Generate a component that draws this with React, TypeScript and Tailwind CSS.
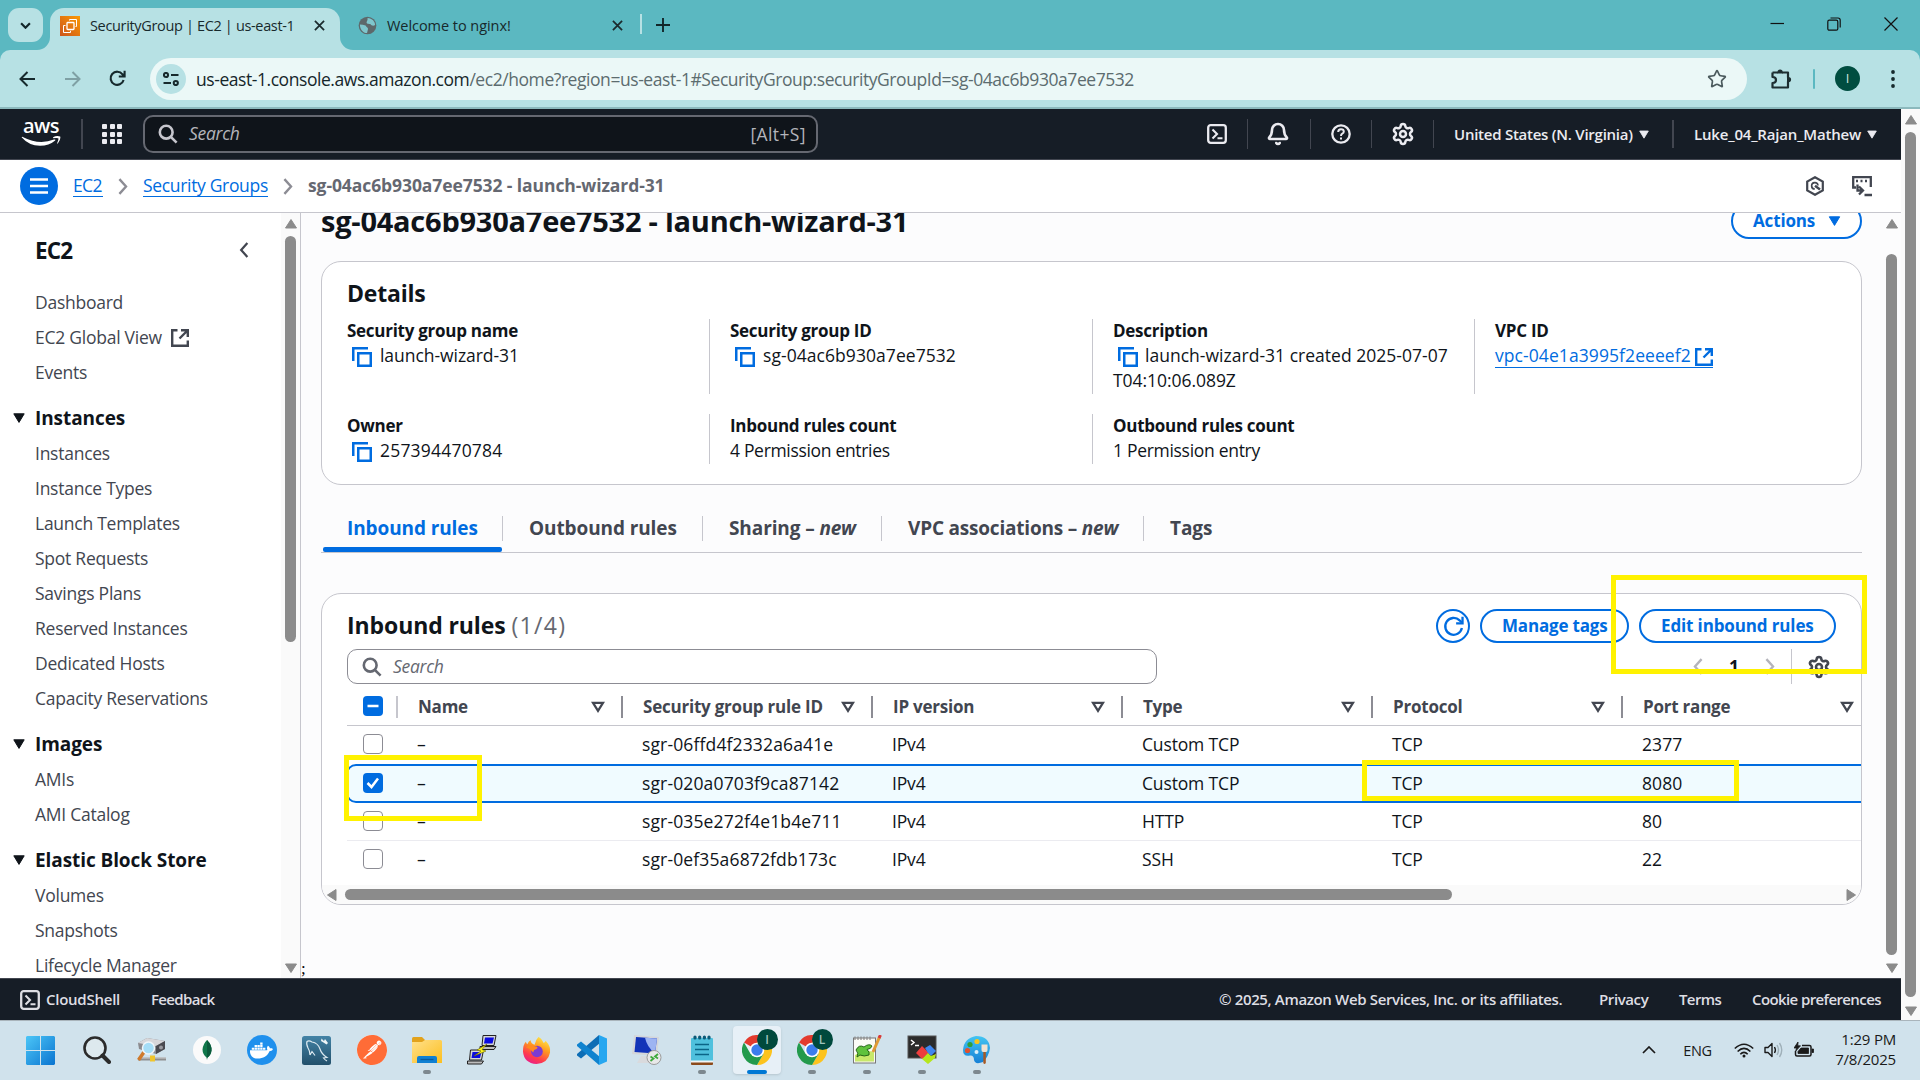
import React from 'react';
import { Settings, Bell, Star } from 'lucide-react';
import { FaDocker } from 'react-icons/fa';
import { SiPostman } from 'react-icons/si';

type Dir = 'up' | 'down' | 'left' | 'right';

function Arrow({ dir }: { dir: Dir }) {
  const d = {
    up: 'M6 1.5 L11.5 10 H.5 Z',
    down: 'M6 10.5 L11.5 2 H.5 Z',
    left: 'M1.5 6 L10 .5 V11.5 Z',
    right: 'M10.5 6 L2 .5 V11.5 Z',
  }[dir];
  return (
    <svg viewBox="0 0 12 12" className="size-3 shrink-0">
      <path d={d} fill="#8b8b8b" stroke="#8b8b8b" strokeLinejoin="round" />
    </svg>
  );
}

function Caret({ className }: { className: string }) {
  return (
    <svg viewBox="0 0 12 10" className={className}>
      <path d="M.8 .8 H11.2 L6 9.4 Z" fill="currentColor" stroke="currentColor" strokeLinejoin="round" />
    </svg>
  );
}

function CopyIcon() {
  return (
    <svg viewBox="0 0 20 20" className="mr-[8px] ml-[5px] inline-block size-5 align-[-5px]" fill="none" stroke="#006ce0" strokeWidth="2.5">
      <path d="M1.25 14 V1.25 H16" />
      <rect x="6.25" y="6.25" width="12.5" height="12.5" />
    </svg>
  );
}

function External({ className }: { className: string }) {
  return (
    <svg viewBox="0 0 18 18" className={className} fill="none" stroke="currentColor" strokeWidth="2.4">
      <path d="M6.5 1.2 H1.2 V16.8 H16.8 V11.5" />
      <path d="M10 1.2 H16.8 V8 M16.5 1.5 L8.5 9.5" />
    </svg>
  );
}

function SearchIcon({ className }: { className: string }) {
  return (
    <svg viewBox="0 0 20 20" className={className} fill="none" stroke="currentColor" strokeWidth="2.6">
      <circle cx="8.2" cy="8.2" r="6.4" />
      <path d="M12.8 12.8 L18.6 18.6" />
    </svg>
  );
}

function Chevron({ className, left = false }: { className: string; left?: boolean }) {
  return (
    <svg viewBox="0 0 10 18" className={className} fill="none" stroke="currentColor" strokeWidth="2.5">
      <path d={left ? 'M8.8 1.2 L1.8 9 L8.8 16.8' : 'M1.2 1.2 L8.2 9 L1.2 16.8'} />
    </svg>
  );
}

function Shell({ className }: { className: string }) {
  return (
    <svg viewBox="0 0 20 20" className={className} fill="none" stroke="currentColor" strokeWidth="2.3">
      <rect x="1.2" y="1.2" width="17.6" height="17.6" rx="2.5" />
      <path d="M5.5 5.5 L10 10 L5.5 14.5 M10.5 14.2 H15.5" strokeWidth="2.1" />
    </svg>
  );
}

function Close({ className }: { className: string }) {
  return (
    <svg viewBox="0 0 12 12" className={className} fill="none" stroke="#1b2a2d" strokeWidth="1.9">
      <path d="M1 1 L11 11 M11 1 L1 11" />
    </svg>
  );
}

function TabStrip() {
  return (
    <div className="flex h-[50px] items-start bg-[#5bb8c1] text-[#17292c]">
      <div className="mt-2 ml-2 flex h-[34px] w-[35px] items-center justify-center rounded-[11px] bg-[#b7e1e4]">
        <svg viewBox="0 0 10 6" className="h-[7px] w-[11px]" fill="none" stroke="#12272a" strokeWidth="2">
          <path d="M1 1 L5 5 L9 1" />
        </svg>
      </div>
      <div className="relative mt-2 ml-[7px] flex h-[42px] w-[290px] items-center rounded-t-[14px] bg-[#b7e1e4] pb-[6px] pl-[10px]">
        <svg viewBox="0 0 13 13" className="absolute bottom-0 -left-[13px] size-[13px]">
          <path d="M13 0 V13 H0 A13 13 0 0 0 13 0Z" fill="#b7e1e4" />
        </svg>
        <svg viewBox="0 0 13 13" className="absolute -right-[13px] bottom-0 size-[13px]">
          <path d="M0 0 V13 H13 A13 13 0 0 1 0 0Z" fill="#b7e1e4" />
        </svg>
        <svg viewBox="0 0 20 20" className="-mt-px size-5" fill="none" stroke="#fff" strokeWidth="1">
          <defs>
            <linearGradient id="ec2" x1="0" y1="1" x2="1" y2="0">
              <stop offset="0" stopColor="#cc551c" />
              <stop offset="1" stopColor="#fb9a04" />
            </linearGradient>
          </defs>
          <rect width="20" height="20" fill="url(#ec2)" stroke="none" />
          <rect x="7" y="6.5" width="7" height="7" rx=".8" strokeWidth="1.3" />
          <path d="M9.5 4.5 V3.5 H16.5 V10.5 H15.5 M5.5 9.5 H3.5 V16.5 H10.5 V14.8" />
        </svg>
        <span className="ml-[10px] w-[219px] text-[14.5px] tracking-[-0.34px] whitespace-nowrap">SecurityGroup | EC2 | us-east-1</span>
        <Close className="-mt-px ml-[5px] size-[11px] shrink-0" />
      </div>
      <div className="mt-[7px] ml-[18px] flex h-9 w-[265px] items-center">
        <svg viewBox="0 0 20 20" className="size-[19px]">
          <circle cx="10" cy="10" r="9.3" fill="#5d686b" />
          <path d="M2 9 C4 9 6 9.5 8 10 C9 12 11 12 10.5 14 L9.5 18 C5 18 2 14 2 9Z M10 2 C15 2 18 6 18 9.5 C16 11 14 10 13 8.5 C11 8 9 8.5 9 6.5 C9.5 5 10.500 4 10 2Z" fill="#7fc6cd" />
        </svg>
        <span className="mt-px ml-[10px] flex-1 text-[14.5px] tracking-[-0.05px]">Welcome to nginx!</span>
        <Close className="size-[11px]" />
      </div>
      <div className="mt-[14px] ml-[17px] h-5 w-[2px] bg-[#b7e1e4]" />
      <svg viewBox="0 0 14 14" className="mt-[18px] ml-[14px] size-[14px]" stroke="#12272a" strokeWidth="1.9">
        <path d="M7 0 V14 M0 7 H14" />
      </svg>
      <div className="mt-[17px] mr-[22px] ml-auto flex items-center gap-[43px]">
        <svg viewBox="0 0 14 14" className="size-[14px]" stroke="#111" strokeWidth="1.2">
          <path d="M.5 6.5 H14" />
        </svg>
        <svg viewBox="0 0 14 14" className="size-[14px]" fill="none" stroke="#111" strokeWidth="1.2">
          <rect x=".8" y="3.2" width="10" height="10" rx="1.5" />
          <path d="M3.5 1 H11 Q13.2 1 13.2 3.2 V10.5" />
        </svg>
        <svg viewBox="0 0 14 14" className="size-[14px]" stroke="#111" strokeWidth="1.2">
          <path d="M.5 .5 L13.5 13.5 M13.5 .5 L.5 13.5" />
        </svg>
      </div>
    </div>
  );
}

function Toolbar() {
  return (
    <div className="bg-[#5bb8c1]">
      <div className="flex h-[59px] items-center rounded-t-[10px] border-b-2 border-[#8cb9bd] bg-[#b7e1e4] text-[#17292c]">
        <svg viewBox="0 0 16 16" className="ml-[19px] size-4" fill="none" stroke="#16292c" strokeWidth="2">
          <path d="M16 8 H2 M8.5 1 L1.5 8 L8.5 15" />
        </svg>
        <svg viewBox="0 0 16 16" className="ml-[30px] size-4" fill="none" stroke="#7fa0a4" strokeWidth="2">
          <path d="M0 8 H14 M7.5 1 L14.5 8 L7.5 15" />
        </svg>
        <svg viewBox="0 0 17 17" className="ml-[28px] size-[17px]" fill="none" stroke="#16292c" strokeWidth="2.1">
          <path d="M14.6 10 A6.6 6.6 0 1 1 13.5 4.3 L15.3 6.3 M15.6 .8 V6.5 H9.8" />
        </svg>
        <div className="ml-[24px] flex h-[42px] w-[1597px] items-center rounded-full bg-[#ebf8f7] pl-[6px]">
          <div className="flex size-[30px] items-center justify-center rounded-full bg-[#b7e1e4]">
            <svg viewBox="0 0 16 14" className="h-[14px] w-4" fill="none" stroke="#16292c" strokeWidth="2">
              <circle cx="3" cy="3" r="2.1" />
              <circle cx="12.8" cy="11" r="2.1" />
              <path d="M8 3 H15.5 M.5 11 H8" />
            </svg>
          </div>
          <span className="mt-[2px] ml-[10px] text-[17.5px] tracking-[-0.44px] whitespace-nowrap text-[#5c6c6f]">
            <span className="text-[#15262a]">us-east-1.console.aws.amazon.com</span>
            /ec2/home?region=us-east-1#SecurityGroup:securityGroupId=sg-04ac6b930a7ee7532
          </span>
          <Star className="mr-[20px] ml-auto size-5 text-[#4b5a5d]" strokeWidth={2} strokeLinejoin="miter" />
        </div>
        <svg viewBox="0 0 22 22" className="ml-[23px] size-[22px]">
          <path d="M2.5 4.5 H8 M12 4.5 H18 V9.5 M18 13.5 V19.5 H2.5 V15 Q6 15 6 12 Q6 9 2.5 9 V4.5" fill="none" stroke="#1d2e31" strokeWidth="2.2" strokeLinejoin="round" />
          <path d="M7.5 5.5 V4 A2.6 2.6 0 0 1 12.7 4 V5.5Z M17 9 H18.5 A2.6 2.6 0 0 1 18.5 14.2 H17Z" fill="#1d2e31" />
        </svg>
        <div className="ml-[21px] h-5 w-[2px] rounded bg-[#5bb8c1]" />
        <div className="ml-[20px] flex size-[25px] items-center justify-center rounded-full bg-[#004d40] text-[13px] text-[#cfe3df]">I</div>
        <svg viewBox="0 0 4 18" className="ml-[31px] h-[18px] w-1" fill="#16292c">
          <circle cx="2" cy="2" r="1.9" />
          <circle cx="2" cy="9" r="1.9" />
          <circle cx="2" cy="16" r="1.9" />
        </svg>
      </div>
    </div>
  );
}

function AwsHeader() {
  return (
    <header className="flex h-[51px] items-center border-b border-[#424650] bg-[#161d26] text-[#ebebf0]">
      <div className="ml-[21px] flex h-[30px] w-10 flex-col items-center">
        <span className="-mt-[2px] text-[20px] leading-[18px] font-semibold tracking-[-0.6px] text-white">aws</span>
        <svg viewBox="0 0 40 10" className="mt-[1px] h-[10px] w-10" fill="#fff">
          <path d="M.6 1.2 Q1 .5 1.8 1 Q18 9.5 33 3.6 Q35 3 34.2 4.5 Q28 9.8 19 9.8 Q8 9.7 .6 1.2Z" />
          <path d="M32 1.2 Q36 -.6 39.2 .6 Q40 3.6 36.8 7.6 Q36 8 36.2 7 Q38 3 37.2 2.2 Q35.5 1.6 32.3 2.2Z" />
        </svg>
      </div>
      <div className="ml-[20px] h-[30px] w-[2px] bg-[#424650]" />
      <div className="ml-[19px] grid grid-cols-3 gap-[2.5px]">
        {Array.from({ length: 9 }, (_, i) => (
          <span key={i} className="size-[5px] rounded-[1px] bg-[#ebebf0]" />
        ))}
      </div>
      <div className="ml-[21px] flex h-[38px] w-[675px] items-center rounded-[10px] border-2 border-[#656871] bg-[#0f141a] pr-[10px] pl-[13px]">
        <SearchIcon className="size-5 text-[#c6c6cd]" />
        <span className="-mt-px ml-[11px] flex-1 text-[17.5px] tracking-[-0.3px] text-[#b4b4bb] italic">Search</span>
        <span className="text-[17.5px] tracking-[0.4px] text-[#b4b4bb]">[Alt+S]</span>
      </div>
      <Shell className="ml-[389px] size-[20px]" />
      <div className="ml-[20px] h-[30px] w-px bg-[#424650]" />
      <Bell className="ml-[18px] size-[24px]" strokeWidth={2.6} />
      <div className="ml-[20px] h-[30px] w-px bg-[#424650]" />
      <svg viewBox="0 0 20 20" className="ml-[20px] size-[20px]" fill="none" stroke="currentColor" strokeWidth="2.3">
        <circle cx="10" cy="10" r="8.7" />
        <path d="M7.2 8 Q7.2 5.2 10 5.2 Q12.8 5.2 12.8 7.6 Q12.8 9 11.3 9.7 Q10 10.4 10 12 M10 13.4 V15.6" strokeWidth="2" />
      </svg>
      <div className="ml-[20px] h-[28px] w-px bg-[#424650]" />
      <Settings className="ml-[19px] size-[24px]" strokeWidth={2.5} />
      <div className="ml-[18px] h-[28px] w-px bg-[#424650]" />
      <span className="ml-[20px] w-[178px] text-[15px] font-semibold tracking-[-0.25px] whitespace-nowrap">United States (N. Virginia)</span>
      <Caret className="ml-[7px] h-[9px] w-[10px]" />
      <div className="ml-[23px] h-[28px] w-[2px] bg-[#424650]" />
      <span className="ml-[20px] w-[167px] text-[15px] font-semibold tracking-[-0.18px] whitespace-nowrap">Luke_04_Rajan_Mathew</span>
      <Caret className="ml-[6px] h-[9px] w-[10px]" />
    </header>
  );
}

function Breadcrumbs() {
  return (
    <div className="flex h-[53px] items-center border-b border-[#c6c6cd] bg-white text-[17.5px]">
      <div className="ml-[20px] flex size-[38px] items-center justify-center rounded-full bg-[#006ce0]">
        <svg viewBox="0 0 18 16" className="h-4 w-[18px]" stroke="#fff" strokeWidth="2.3">
          <path d="M0 1.5 H18 M0 8 H18 M0 14.5 H18" />
        </svg>
      </div>
      <span className="-mt-px ml-[15px] w-[30px] border-b border-[#006ce0] leading-[22px] tracking-[-0.6px] text-[#006ce0]">EC2</span>
      <Chevron className="ml-[15px] h-[17px] w-[10px] text-[#8c8c94]" />
      <span className="-mt-px ml-[15px] w-[125px] border-b border-[#006ce0] leading-[22px] tracking-[-0.33px] whitespace-nowrap text-[#006ce0]">Security Groups</span>
      <Chevron className="ml-[15px] h-[17px] w-[10px] text-[#8c8c94]" />
      <span className="-mt-px ml-[15px] font-bold tracking-[-0.09px] text-[#656871]">sg-04ac6b930a7ee7532 - launch-wizard-31</span>
      <svg viewBox="0 0 20 20" className="ml-auto size-[20px] text-[#424650]" fill="none" stroke="currentColor" strokeWidth="2.2">
        <path d="M10 1.2 L17.8 5.6 V14.4 L10 18.8 L2.2 14.4 V5.6 Z" />
        <path d="M13 9.5 A3.2 3.2 0 1 0 9.8 13" strokeWidth="1.6" />
        <path d="M10 9.8 L15 13.5" strokeWidth="2.4" />
      </svg>
      <svg viewBox="0 0 22 22" className="mr-[28px] ml-[26px] size-[22px] text-[#424650]" fill="none" stroke="currentColor" strokeWidth="2.3">
        <path d="M5 12.5 H2.2 V2.2 H19.8 V12" />
        <path d="M5 6 H7 M9.5 6 H11.5 M14 6 H16" />
        <path d="M6.5 9.5 V15.5 H11 M8 11.5 L12 15.5 L8 19.5 M13.5 20 H21" />
      </svg>
    </div>
  );
}

const NAV: { title?: string; items: string[] }[] = [
  { items: ['Dashboard', 'EC2 Global View', 'Events'] },
  {
    title: 'Instances',
    items: ['Instances', 'Instance Types', 'Launch Templates', 'Spot Requests', 'Savings Plans', 'Reserved Instances', 'Dedicated Hosts', 'Capacity Reservations'],
  },
  { title: 'Images', items: ['AMIs', 'AMI Catalog'] },
  { title: 'Elastic Block Store', items: ['Volumes', 'Snapshots', 'Lifecycle Manager'] },
];

function Sidebar() {
  return (
    <aside className="flex w-[301px] shrink-0 border-r border-[#c6c6cd] bg-white">
      <div className="w-[281px] overflow-hidden">
        <div className="flex h-[72px] items-center pt-[3px] pl-[35px]">
          <span className="w-[204px] text-[22.5px] font-bold tracking-[-0.9px] text-[#0f141a]">EC2</span>
          <Chevron left className="-mt-px h-[16px] w-[10px] text-[#424650]" />
        </div>
        {NAV.map((g) => (
          <div key={g.title ?? 'top'}>
            {g.title && (
              <div className="mt-[10px] flex h-9 items-center pl-[13px]">
                <Caret className="h-[10px] w-3 text-[#0f141a]" />
                <span className="ml-[10px] text-[19px] font-bold tracking-[-0.08px] text-[#0f141a]">{g.title}</span>
              </div>
            )}
            {g.items.map((t) => (
              <div key={t} className="flex h-[35px] items-center pl-[35px] text-[17.5px] tracking-[-0.25px] text-[#424650]">
                {t}
                {t === 'EC2 Global View' && <External className="mt-px ml-[9px] size-[18px]" />}
              </div>
            ))}
          </div>
        ))}
      </div>
      <div className="flex w-[19px] flex-col items-center bg-[#fafafa] pt-[5px] pb-[4px]">
        <Arrow dir="up" />
        <div className="mt-[6px] h-[406px] w-[11px] rounded-full bg-[#8b8b8b]" />
        <div className="mt-auto">
          <Arrow dir="down" />
        </div>
      </div>
    </aside>
  );
}

function Field({ label, children, first = false }: { label: string; children: React.ReactNode; first?: boolean }) {
  return (
    <div className={first ? '' : 'border-l border-[#c6c6cd] pl-[20px]'}>
      <div className="-mt-px text-[17px] font-bold tracking-[-0.27px]">{label}</div>
      <div className="whitespace-nowrap">{children}</div>
    </div>
  );
}

function Details() {
  return (
    <section className="mx-[20px] mt-[22px] h-[224px] rounded-[20px] border border-[#c6c6cd] bg-white pt-[16px] pl-[25px] text-[17.5px] leading-[25px] text-[#0f141a]">
      <h2 className="h-[41px] text-[23px] leading-[30px] font-bold tracking-[-0.2px]">Details</h2>
      <div className="grid h-[75px] grid-cols-[362px_383px_382px_1fr]">
        <Field first label="Security group name">
          <CopyIcon />
          <span className="tracking-[-0.05px]">launch-wizard-31</span>
        </Field>
        <Field label="Security group ID">
          <CopyIcon />
          <span className="tracking-[0.06px]">sg-04ac6b930a7ee7532</span>
        </Field>
        <Field label="Description">
          <CopyIcon />
          <span className="-ml-px tracking-[0.02px]">launch-wizard-31 created 2025-07-07</span>
          <br />
          <span className="tracking-[-0.05px]">T04:10:06.089Z</span>
        </Field>
        <Field label="VPC ID">
          <span className="border-b border-[#006ce0] text-[#006ce0]">
            <span className="tracking-[0.08px]">vpc-04e1a3995f2eeeef2 </span>
            <External className="inline-block size-[18px] align-[-4px]" />
          </span>
        </Field>
      </div>
      <div className="mt-5 grid h-[50px] grid-cols-[362px_383px_382px_1fr]">
        <Field first label="Owner">
          <CopyIcon />
          <span className="tracking-[0.2px]">257394470784</span>
        </Field>
        <Field label="Inbound rules count">
          <span className="tracking-[-0.32px]">4 Permission entries</span>
        </Field>
        <Field label="Outbound rules count">
          <span className="tracking-[-0.3px]">1 Permission entry</span>
        </Field>
      </div>
    </section>
  );
}

function Tabs() {
  const tab = 'flex h-[25px] items-center pl-[26px] border-r border-[#c6c6cd]';
  return (
    <div className="mx-[20px] mt-[31px] flex h-[37px] border-b border-[#c6c6cd] text-[19px] font-bold tracking-[-0.1px] whitespace-nowrap text-[#424650]">
      <div className="relative flex h-[25px] w-[182px] items-center border-r border-[#c6c6cd] pl-[26px] text-[#006ce0]">
        Inbound rules
        <span className="absolute top-[31px] left-[2px] h-[5px] w-[179px] rounded-[2px] bg-[#006ce0]" />
      </div>
      <div className={`${tab} w-[200px]`}>Outbound rules</div>
      <div className={`${tab} w-[179px]`}>
        Sharing –&nbsp;<i className="tracking-[-0.3px]">new</i>
      </div>
      <div className={`${tab} w-[262px] tracking-[-0.2px]`}>
        VPC associations –&nbsp;<i>new</i>
      </div>
      <div className="flex h-[25px] items-center pl-[26px]">Tags</div>
    </div>
  );
}

type Check = 'none' | 'on' | 'mixed';

function Box({ state }: { state: Check }) {
  if (state === 'none') return <span className="block size-5 rounded-[4px] border-[1.5px] border-[#8c8c94] bg-white" />;
  return (
    <svg viewBox="0 0 20 20" className="size-5" fill="none" stroke="#fff" strokeWidth="2.5">
      <rect width="20" height="20" rx="4" fill="#006ce0" stroke="none" />
      <path d={state === 'on' ? 'M4.5 10 L8.5 14 L15 5.5' : 'M4.5 10 H15.5'} />
    </svg>
  );
}

const COLS = ['Name', 'Security group rule ID', 'IP version', 'Type', 'Protocol', 'Port range'];
const ROWS: { h: string; sel?: boolean; v: string[] }[] = [
  { h: 'h-[38px] pb-[2px]', v: ['–', 'sgr-06ffd4f2332a6a41e', 'IPv4', 'Custom TCP', 'TCP', '2377'] },
  { h: 'h-[39px] -mr-[12px] -ml-px rounded-[10px] border-2 border-[#006ce0] bg-[#f0fbff] pb-[2px]', sel: true, v: ['–', 'sgr-020a0703f9ca87142', 'IPv4', 'Custom TCP', 'TCP', '8080'] },
  { h: 'h-[38px] border-b border-[#ebebf0] pb-[2px]', v: ['–', 'sgr-035e272f4e1b4e711', 'IPv4', 'HTTP', 'TCP', '80'] },
  { h: 'h-[38px] pb-[3px]', v: ['–', 'sgr-0ef35a6872fdb173c', 'IPv4', 'SSH', 'TCP', '22'] },
];
const WIDTHS = ['w-[225px]', 'w-[250px]', 'w-[250px]', 'w-[250px]', 'w-[250px]', 'w-[240px]'];

function Rules() {
  return (
    <section className="mx-[20px] mt-[40px] h-[312px] overflow-hidden rounded-[20px] border border-[#c6c6cd] bg-white text-[#0f141a]">
      <div className="flex h-[55px] items-center pt-[9px] pr-[25px] pl-[25px]">
        <h2 className="-mt-[2px] text-[23px] leading-[30px] font-bold tracking-[-0.1px]">
          Inbound rules <span className="font-normal tracking-[1.3px] text-[#656871]">(1/4)</span>
        </h2>
        <div className="ml-auto flex h-[34px] gap-[10px] text-[17px] font-bold tracking-[-0.13px] whitespace-nowrap text-[#006ce0]">
          <div className="flex w-[34px] items-center justify-center rounded-full border-2 border-[#006ce0]">
            <svg viewBox="0 0 20 20" className="size-[21px]" fill="none" stroke="currentColor" strokeWidth="2.2">
              <path d="M18 11.5 A8 8 0 1 1 15.8 4.2 L18 6.2" />
              <path d="M18.6 .8 V7 H12.5" />
            </svg>
          </div>
          <div className="flex w-[149px] items-center rounded-full border-2 border-[#006ce0] pl-5 tracking-[-0.18px]">Manage tags</div>
          <div className="flex w-[197px] items-center rounded-full border-2 border-[#006ce0] pl-5">Edit inbound rules</div>
        </div>
      </div>
      <div className="flex h-[35px] items-center pr-[30px] pl-[25px]">
        <div className="flex h-[35px] w-[810px] items-center rounded-[10px] border-[1.5px] border-[#8c8c94] pl-[14px] text-[#656871]">
          <SearchIcon className="size-5" />
          <span className="-mt-px ml-[11px] text-[17.5px] tracking-[-0.3px] italic">Search</span>
        </div>
        <Chevron left className="ml-auto h-[17px] w-[10px] text-[#b4b4bb]" />
        <span className="ml-[22px] w-[18px] text-center text-[17.5px] font-bold">1</span>
        <Chevron className="ml-[22px] h-[17px] w-[10px] text-[#b4b4bb]" />
        <div className="ml-[16px] h-[35px] w-px bg-[#c6c6cd]" />
        <Settings className="ml-[15px] size-[24px] text-[#424650]" strokeWidth={2.6} />
      </div>
      <div className="ml-[25px] flex h-[42px] items-center border-b border-[#c6c6cd] pt-[4px]">
        <div className="flex h-[22px] w-[51px] shrink-0 items-center border-r-2 border-[#c6c6cd] pb-[2px] pl-[16px]">
          <Box state="mixed" />
        </div>
        {COLS.map((c, i) => (
          <div
            key={c}
            className={`${WIDTHS[i]} flex h-[22px] shrink-0 items-center pl-[20px] text-[17px] font-bold tracking-[-0.22px] whitespace-nowrap text-[#424650] ${i < 5 ? 'border-r-2 border-[#8c8c94] pr-[16px]' : 'pr-[9px]'}`}
          >
            {c}
            <svg viewBox="0 0 14 12" className="ml-auto h-[12px] w-[14px]" fill="none" stroke="#424650" strokeWidth="2.3">
              <path d="M2 1.8 H12 L7 9.8 Z" />
            </svg>
          </div>
        ))}
      </div>
      <div className="h-[159px]">
        {ROWS.map((r) => (
          <div key={r.v[1]} className="ml-[25px]">
            <div className={`flex items-center ${r.h}`}>
              <div className={r.sel ? 'w-[49px] shrink-0 pl-[15px]' : 'w-[50px] shrink-0 pl-[16px]'}>
                <Box state={r.sel ? 'on' : 'none'} />
              </div>
              {r.v.map((v, i) => (
                <div key={i} className={`${WIDTHS[i]} shrink-0 pt-px pl-[20px] text-[17.5px] ${i === 1 ? 'tracking-[0.14px]' : i === 5 ? 'tracking-[0.1px]' : 'tracking-[-0.15px]'}`}>
                  {v}
                </div>
              ))}
            </div>
          </div>
        ))}
      </div>
      <div className="flex h-[19px] items-center bg-[#fafafa] pr-[4px] pl-[4px]">
        <Arrow dir="left" />
        <div className="ml-[7px] h-[11px] w-[1107px] rounded-full bg-[#8b8b8b]" />
        <div className="ml-auto">
          <Arrow dir="right" />
        </div>
      </div>
    </section>
  );
}

function Main() {
  return (
    <main className="relative flex min-w-0 flex-1 bg-[#fcfcfd]">
      <div className="h-full w-[1581px] overflow-hidden">
        <div className="-mt-[10px] flex h-9 items-center justify-between px-[20px]">
          <h1 className="text-[29px] leading-9 font-bold tracking-[-0.24px] text-[#0f141a]">sg-04ac6b930a7ee7532 - launch-wizard-31</h1>
          <div className="flex h-[36px] w-[131px] items-center rounded-full border-2 border-[#006ce0] bg-white pl-5 text-[17px] font-bold tracking-[-0.15px] text-[#006ce0]">
            Actions
            <Caret className="ml-[13px] h-[10px] w-[13px]" />
          </div>
        </div>
        <Details />
        <Tabs />
        <Rules />
      </div>
      <div className="flex w-[19px] flex-col items-center pt-[5px] pb-[4px]">
        <Arrow dir="up" />
        <div className="mt-[24px] h-[701px] w-[11px] rounded-full bg-[#8b8b8b]" />
        <div className="mt-auto">
          <Arrow dir="down" />
        </div>
      </div>
      <span className="absolute bottom-[-1px] left-0 font-[Liberation_Serif] text-[17px] leading-[20px]">;</span>
      <div className="absolute top-[362px] left-[1310px] h-[99px] w-[256px] border-[5px] border-[#fff200]" />
      <div className="absolute top-[542px] left-[43px] h-[66px] w-[138px] border-[5px] border-[#fff200]" />
      <div className="absolute top-[547px] left-[1061px] h-[41px] w-[377px] border-[5px] border-[#fff200]" />
    </main>
  );
}

function Footer() {
  return (
    <footer className="flex h-[42px] items-center border-t border-[#424650] bg-[#161d26] text-[15px] font-semibold whitespace-nowrap text-[#dedee3]">
      <Shell className="ml-[20px] size-[20px]" />
      <span className="ml-[6px] w-[105px] tracking-[-0.25px]">CloudShell</span>
      <span className="tracking-[-0.65px]">Feedback</span>
      <span className="ml-auto w-[380px] tracking-[-0.35px]">© 2025, Amazon Web Services, Inc. or its affiliates.</span>
      <span className="w-[80px] tracking-[-0.4px]">Privacy</span>
      <span className="w-[73px] tracking-[-0.6px]">Terms</span>
      <span className="w-[149px] tracking-[-0.6px]">Cookie preferences</span>
    </footer>
  );
}

function Chrome({ letter }: { letter: string }) {
  return (
    <div className="relative">
      <svg viewBox="0 0 30 30" className="size-[30px]">
        <path d="M15 15 L2 7.5 A15 15 0 0 1 28 7.5 L15 7.5Z" fill="#e33b2e" />
        <path d="M15 15 V7.5 H28 A15 15 0 0 1 15 30 L21.5 18.75Z" fill="#fcc31e" />
        <path d="M15 15 L21.5 18.75 L15 30 A15 15 0 0 1 2 7.5 L8.5 18.75Z" fill="#239a4c" />
        <circle cx="15" cy="15" r="7.3" fill="#fff" />
        <circle cx="15" cy="15" r="5.7" fill="#3b7ded" />
      </svg>
      <span className="absolute -top-[6px] left-[15px] flex size-[21px] items-center justify-center rounded-full bg-[#00493d] text-[12px] font-semibold text-[#9fc2bc]">{letter}</span>
    </div>
  );
}

function Computer({ x, y }: { x: number; y: number }) {
  return (
    <g transform={`translate(${x} ${y})`}>
      <path d="M3 0 H16 L14 10 H2Z" fill="#d6d6d6" stroke="#222" />
      <path d="M5 2 H14 L12.5 8 H4Z" fill="#0a0ae0" />
      <path d="M0 11 H16 L14 14 H0Z" fill="#bdbdbd" stroke="#222" />
    </g>
  );
}

const TASKS: { icon: React.ReactNode; dot?: boolean; active?: boolean }[] = [
  {
    icon: (
      <svg viewBox="0 0 29 29" className="mr-[2px] size-[29px]">
        <defs>
          <linearGradient id="win" x1="0" y1="0" x2="1" y2="1">
            <stop offset="0" stopColor="#4cc6f7" />
            <stop offset="1" stopColor="#0a74d0" />
          </linearGradient>
        </defs>
        <path d="M1 0 H14 V14 H0 V1Z M15 0 H28 L29 1 V14 H15Z M0 15 H14 V29 H1 L0 28Z M15 15 H29 V28 L28 29 H15Z" fill="url(#win)" />
      </svg>
    ),
  },
  {
    icon: (
      <svg viewBox="0 0 28 28" className="size-[28px]" fill="none" stroke="#2b2b2b">
        <circle cx="12" cy="12" r="10.5" strokeWidth="2.6" fill="#dde9ee" />
        <path d="M19.5 19.5 L26 26" strokeWidth="4" strokeLinecap="round" />
      </svg>
    ),
  },
  {
    icon: (
      <svg viewBox="0 0 30 26" className="h-[26px] w-[30px]">
        <path d="M1 6 L10 1 L28 4 V12 L19 17 L2 12Z" fill="#8a8a8e" />
        <path d="M1 6 L10 1 L28 4 L19 9Z" fill="#d7d7da" />
        <path d="M19 9 L28 4 V12 L19 17Z" fill="#4a4a50" />
        <circle cx="24" cy="10.5" r="2" fill="#9a9aa0" />
        <path d="M1 20.5 H29 V23.5 H1Z" fill="#8e8e8e" />
        <path d="M1 20.5 H29 V21.5 H1Z" fill="#d0d0d0" />
        <rect x="13" y="18.5" width="5" height="6" fill="#f0c52c" />
        <path d="M7 15 L1.5 23" stroke="#cf7a2b" strokeWidth="3.5" />
        <circle cx="11.5" cy="11" r="6" fill="#a5ddf6" stroke="#f0f6f9" strokeWidth="1.5" />
      </svg>
    ),
  },
  {
    icon: (
      <svg viewBox="0 0 28 28" className="size-[28px]">
        <circle cx="14" cy="14" r="14" fill="#fafafa" />
        <path d="M14 4 Q19 9 18.5 14.5 Q18 19 14.5 21.5 L14 24 L13.5 21.5 Q9.5 18 9.5 13.5 Q10 8 14 4Z" fill="#10774a" />
        <path d="M14 4 Q19 9 18.5 14.5 Q18 19 14 22Z" fill="#0a5a3b" />
      </svg>
    ),
  },
  {
    icon: (
      <div className="flex size-[30px] items-center justify-center rounded-full bg-[#1f90ed] text-white">
        <FaDocker className="size-[23px]" />
      </div>
    ),
  },
  {
    icon: (
      <svg viewBox="0 0 29 29" className="size-[29px]">
        <defs>
          <linearGradient id="sql" x1="0" y1="0" x2="0" y2="1">
            <stop offset="0" stopColor="#4383a6" />
            <stop offset="1" stopColor="#22506b" />
          </linearGradient>
        </defs>
        <rect width="29" height="29" rx="2.5" fill="url(#sql)" />
        <path d="M8 19 Q8 15 6 12 Q4 8 5 5.5 Q7 4 10 6 Q16 7 18 13 Q19.5 18 25 21.5 L21.5 22 Q23 24 25 25 M8 19 L10 15.5 L13 19.5" fill="none" stroke="#dceaf1" strokeWidth="1.2" />
        <path d="M19.5 2.5 L22 5 L23 3 L26 7 L24.5 8.5 L21.5 6.5 L19 5Z" fill="#eef5f8" />
      </svg>
    ),
  },
  {
    icon: (
      <div className="flex size-[30px] items-center justify-center rounded-full bg-white">
        <SiPostman className="size-[30px] text-[#ff6c37]" />
      </div>
    ),
  },
  {
    dot: true,
    icon: (
      <svg viewBox="0 0 30 26" className="h-[26px] w-[30px]">
        <defs>
          <linearGradient id="fold" x1="0" y1="0" x2="1" y2="1">
            <stop offset="0" stopColor="#ffe08a" />
            <stop offset="1" stopColor="#fcbf20" />
          </linearGradient>
        </defs>
        <path d="M0 1.5 Q0 0 1.5 0 H10 L13 3 V7 H0Z" fill="#e2a21c" />
        <path d="M0 5 H10 L13 3 H28.5 Q30 3 30 4.5 V26 H0Z" fill="url(#fold)" />
        <path d="M5 26 V21 Q5 19 7 19 H23 Q25 19 25 21 V26Z" fill="#1080d2" />
        <path d="M8.5 22.5 H21.5" stroke="#0b5a9b" strokeWidth="1.3" />
      </svg>
    ),
  },
  {
    icon: (
      <svg viewBox="0 0 30 30" className="size-[30px]">
        <Computer x={13} y={0.5} />
        <Computer x={0.5} y={15} />
        <path d="M20 9 L10 15 L14 16 L7 21 L19 16 L15 14.5Z" fill="#fdf31c" stroke="#6b6400" strokeWidth=".6" />
      </svg>
    ),
  },
  {
    icon: (
      <svg viewBox="0 0 30 30" className="size-[29px]">
        <defs>
          <linearGradient id="ff" x1=".8" y1="0" x2=".3" y2="1">
            <stop offset="0" stopColor="#fff04a" />
            <stop offset=".4" stopColor="#ff9a1f" />
            <stop offset=".75" stopColor="#ff3b4d" />
            <stop offset="1" stopColor="#e91e8a" />
          </linearGradient>
        </defs>
        <path d="M17 1 Q21 3 22 7 Q24 7 24.5 5 Q30 11 29 17 Q27 28 15 29 Q2 28 1 16 Q1 9 4 6 Q4.5 8 5.5 8.5 Q7 5 9 4.5 Q9 8 13 9 Q14 4 17 1Z" fill="url(#ff)" />
        <circle cx="15.5" cy="16" r="6" fill="#7b3bd3" />
        <path d="M4 12 Q9 7 13 10.5 Q18 11 15 13.5 Q12 14 11.5 17 Q7 12 4 12Z" fill="#ff8a1e" />
      </svg>
    ),
  },
  {
    icon: (
      <svg viewBox="0 0 30 30" className="size-[30px]">
        <path d="M22 0 L23 8 L4 23.5 L0 20.5 V19Z" fill="#0d6db5" />
        <path d="M22 30 L23 22 L4 6.5 L0 9.5 V11Z" fill="#0f83cf" />
        <path d="M22 0 L30 3.5 V26.5 L22 30 V8Z" fill="#27a7f0" />
      </svg>
    ),
  },
  {
    icon: (
      <svg viewBox="0 0 30 30" className="size-[30px]">
        <path d="M2 0 L27 2 L25 21 L0 19Z" fill="#d4d6da" />
        <path d="M4 2 L25 3.5 L23 18.5 L2.500 17Z" fill="#1233b8" />
        <path d="M13 2.700 L25 3.500 L23 18.500 Q15 12 13 2.700Z" fill="#9db4f2" />
        <path d="M9 21 H17 L18 28 H5Z" fill="#d9dadd" />
        <circle cx="22" cy="22.5" r="7" fill="#e8e8e8" stroke="#9b9b9b" />
        <path d="M18.5 21.500 L21.5 23.500 L18.5 26 M26 19 L23 21.500 L26 23.500" fill="none" stroke="#3ea93b" strokeWidth="1.8" />
      </svg>
    ),
  },
  {
    dot: true,
    icon: (
      <svg viewBox="0 0 22 30" className="h-[30px] w-[22px]">
        <rect y="3" width="22" height="25" rx="1" fill="#4fc0dd" />
        <path d="M0 26 H22 V29 Q22 30 21 30 H1 Q0 30 0 29Z" fill="#8b4a1b" />
        <path d="M0 25.5 H22 V27.5 H0Z" fill="#f1f4f5" />
        <path d="M4 9.5 H18 M4 14.5 H18 M4 19.5 H18" stroke="#0b6487" strokeWidth="1.7" />
        <path d="M4 2 V3 M8.7 2 V3 M13.4 2 V3 M18 2 V3" stroke="#0b5a78" strokeWidth="3.2" strokeLinecap="round" />
      </svg>
    ),
  },
  { active: true, icon: <Chrome letter="I" /> },
  { dot: true, icon: <Chrome letter="L" /> },
  {
    dot: true,
    icon: (
      <svg viewBox="0 0 30 30" className="size-[30px]">
        <rect x="1.5" y="3" width="22" height="25" fill="#fbfbf6" stroke="#777" />
        <path d="M3 20 Q12 14 22 17 V26.5 H3Z" fill="#c8e86a" />
        <path d="M4 15 Q7 9 12 12 Q17 8 20 11 Q19 14 15 14.5 Q18 17 17 20 Q12 22 8 20 L5 22 Q7 18 4 15Z" fill="#5fc23c" stroke="#1d5a12" strokeWidth=".9" />
        <path d="M3 1.5 V5 M6 1.5 V5 M9 1.5 V5 M12 1.5 V5 M15 1.5 V5 M18 1.5 V5" stroke="#8a8a8a" strokeWidth="1.2" />
        <path d="M27.5 2 L21 17" stroke="#e09a35" strokeWidth="3" />
        <path d="M28.5 0 L27 3" stroke="#d83a3a" strokeWidth="3" />
      </svg>
    ),
  },
  {
    dot: true,
    icon: (
      <svg viewBox="0 0 30 30" className="size-[30px]">
        <rect x="1" y="1" width="28" height="22" fill="#2b2b2b" stroke="#555" />
        <path d="M4 5 L7 7.5 L4 10 M8 10.5 H12" stroke="#fff" strokeWidth="1.5" fill="none" />
        <path d="M9 18 L15 11 L18 14 L22 18 L15 24Z" fill="#ee3d3d" />
        <path d="M18 13 L23 10 L29 16 L24 21 L21 18Z" fill="#3f86ee" />
        <path d="M15 24 L21 18 L24 21 L29 19 L28 23 L21 29Z" fill="#b5e61d" />
      </svg>
    ),
  },
  {
    dot: true,
    icon: (
      <svg viewBox="0 0 30 30" className="size-[30px]">
        <defs>
          <linearGradient id="pal" x1="0" y1="0" x2="0" y2="1">
            <stop offset="0" stopColor="#43c5f2" />
            <stop offset="1" stopColor="#1680d6" />
          </linearGradient>
        </defs>
        <path d="M14 1 Q27 1 28 13 Q27 21 21 27 Q13 30 12 25 Q12 20 8 20.5 Q1 22 1 15 Q2 3 14 1Z" fill="url(#pal)" />
        <circle cx="8" cy="9.5" r="2.6" fill="#2f9e3a" />
        <circle cx="15" cy="6.5" r="2.6" fill="#f8c51d" />
        <circle cx="5.5" cy="15.5" r="2.6" fill="#e0502d" />
        <circle cx="14.5" cy="17" r="2" fill="#d9eef9" />
        <path d="M19.5 9.5 H25.5 V15 Q25.5 17 24 17 H21 Q19.5 17 19.5 15Z" fill="#efe3d3" />
        <path d="M21.3 17 H23.8 V28 Q22.5 30 21.3 28Z" fill="#a85a25" />
      </svg>
    ),
  },
];

function Taskbar() {
  return (
    <div className="flex h-[60px] border-t border-[#a9b4bb] bg-[#d0e2ec] pl-[14px] text-[#1a1a1a]">
      {TASKS.map((t, i) => (
        <div key={i} className="flex h-full w-[55px] items-start justify-center pt-[5px]">
          <div className={`relative flex size-12 items-center justify-center ${t.active ? 'rounded-[4px] bg-[#e7f0f7] shadow-sm' : ''}`}>
            {t.icon}
            {t.dot && <span className="absolute bottom-0 h-1 w-2 rounded-full bg-[#7d888f]" />}
            {t.active && <span className="absolute bottom-0 h-1 w-5 rounded-full bg-[#0078d4]" />}
          </div>
        </div>
      ))}
      <div className="mr-[24px] ml-auto flex items-center text-[15px]">
        <svg viewBox="0 0 14 8" className="-mt-px mr-px h-2 w-[14px]" fill="none" stroke="#1a1a1a" strokeWidth="1.7">
          <path d="M1 7 L7 1 L13 7" />
        </svg>
        <span className="ml-[26px] w-[30px] text-[14.5px] tracking-[-0.3px]">ENG</span>
        <svg viewBox="0 0 20 15" className="-mt-px ml-[21px] h-[15px] w-5" fill="none" stroke="#1a1a1a" strokeWidth="1.6">
          <path d="M.8 5.5 Q10 -3 19.2 5.5 M3.6 8.5 Q10 2.2 16.4 8.5 M6.3 11.3 Q10 7.5 13.7 11.3" />
          <circle cx="10" cy="13" r="1.5" fill="#1a1a1a" stroke="none" />
        </svg>
        <svg viewBox="0 0 20 16" className="-mt-px ml-[10px] h-4 w-5" fill="none" stroke="#1a1a1a" strokeWidth="1.4">
          <path d="M1 5.5 H4 L8 1.5 V14.5 L4 10.5 H1Z" strokeLinejoin="round" />
          <path d="M10.5 5 Q12.3 8 10.5 11" />
          <path d="M13 3 Q16 8 13 13 M15.5 1 Q20 8 15.5 15" stroke="#9fb0b9" />
        </svg>
        <svg viewBox="0 0 20 16" className="-mt-[2px] ml-[10px] h-4 w-5" fill="none" stroke="#1a1a1a" strokeWidth="1.5">
          <path d="M8 3.5 H15.5 Q17 3.5 17 5 V12.5 Q17 14 15.5 14 H3 Q1.5 14 1.5 12.5 V9" />
          <path d="M7 6 H14.5 V11.5 H4 V9.5Z M4 0 L0 6 H2.5 L1.8 9 L6.5 3.8 H3.8 Z M18 7 H19.5 V10.5 H18Z" fill="#1a1a1a" strokeWidth=".8" />
        </svg>
        <div className="-mt-[3px] ml-[21px] text-right leading-[20px] tracking-[-0.2px]">
          <div>1:29 PM</div>
          <div>7/8/2025</div>
        </div>
      </div>
    </div>
  );
}

export default function App() {
  return (
    <div className="flex h-[1080px] w-[1920px] flex-col overflow-hidden bg-white font-['Open_Sans','Noto_Sans',sans-serif]">
      <TabStrip />
      <Toolbar />
      <div className="flex h-[911px]">
        <div className="flex w-[1901px] flex-col">
          <AwsHeader />
          <Breadcrumbs />
          <div className="flex h-[765px]">
            <Sidebar />
            <Main />
          </div>
          <Footer />
        </div>
        <div className="flex w-[19px] flex-col items-center bg-[#fafafa] pt-[5px] pb-[3px]">
          <Arrow dir="up" />
          <div className="mt-[6px] h-[865px] w-[11px] rounded-full bg-[#8b8b8b]" />
          <div className="mt-auto">
            <Arrow dir="down" />
          </div>
        </div>
      </div>
      <Taskbar />
    </div>
  );
}
